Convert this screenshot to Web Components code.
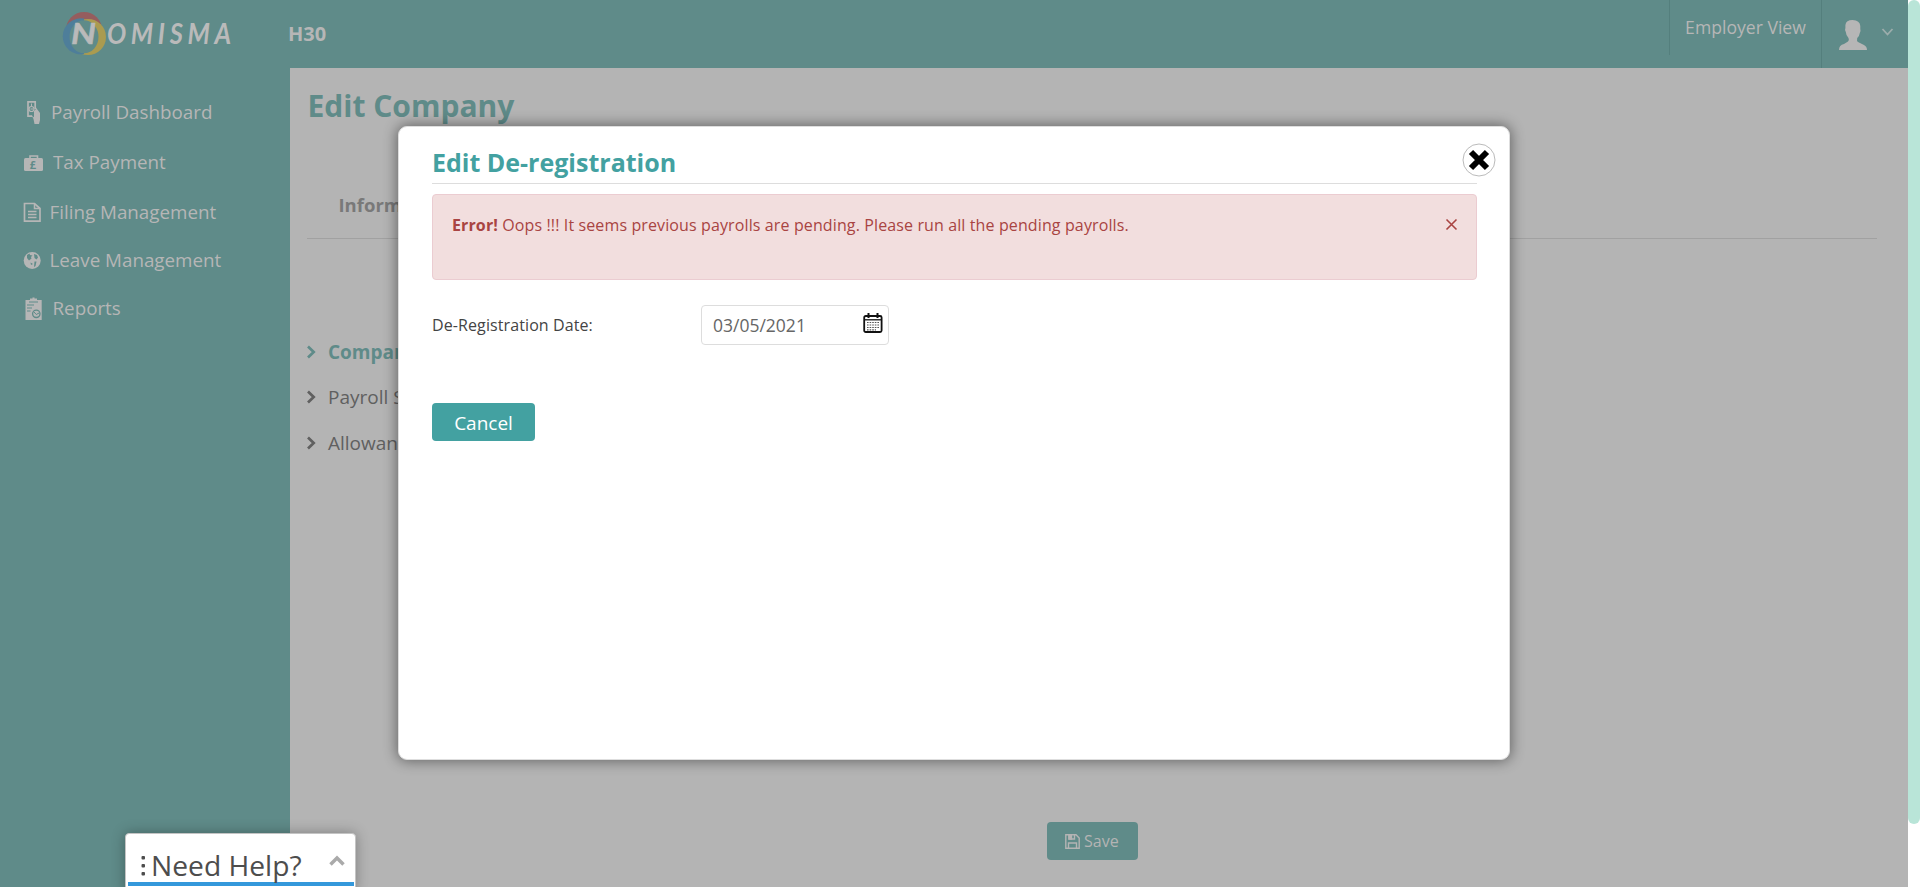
<!DOCTYPE html>
<html lang="en">
<head>
<meta charset="utf-8">
<title>Nomisma</title>
<style>
html,body{margin:0;height:100%;overflow:hidden;font-family:"Open Sans","Noto Sans",sans-serif;background:#fff}
</style>
</head>
<body>
<nomisma-app></nomisma-app>
<script>
function define(name, html){
  customElements.define(name, class extends HTMLElement{
    constructor(){
      super();
      const t=document.createElement('template');
      t.innerHTML=html;
      this.attachShadow({mode:'open'}).appendChild(t.content.cloneNode(true));
    }
  });
}

define('nomisma-logo', `<style>:host{display:block;width:290px;height:68px}svg{display:block}</style>
<svg width="290" height="68" viewBox="0 0 290 68">
  <circle cx="84" cy="30" r="18" fill="#955d5e"/>
  <circle cx="88" cy="37" r="18" fill="#aa9b50"/>
  <path d="M84 18.600A18 18 0 1 0 84 54Z" fill="#4e7e9a"/>
  <ellipse cx="84" cy="36.800" rx="14.500" ry="16.500" fill="#5f8b89"/>
  <g fill="#bababa" font-family="Lato,sans-serif" font-style="italic" font-weight="700" font-size="29">
    <text x="71" y="44" textLength="25" lengthAdjust="spacingAndGlyphs" stroke="#bababa" stroke-width=".5">N</text>
    <text transform="translate(107 44) scale(.88 1)" x="0" y="0" textLength="141" lengthAdjust="spacing">OMISMA</text>
  </g>
</svg>`);

define('top-bar', `<style>
:host{display:flex;height:68px;background:#5f8b89;color:#b6b6b6}
b{font-size:20px;line-height:68px;margin-left:-2px;flex:1}
.view{height:55px;width:151px;border-left:1px solid #547f7d;text-align:center;font-size:17.600px;line-height:54px;white-space:nowrap}
.user{width:86px;border-left:1px solid #547f7d}
svg{display:block}
</style>
<nomisma-logo></nomisma-logo><b>H30</b>
<div class="view">Employer View</div>
<div class="user"><svg width="86" height="68" viewBox="1822 0 86 68"><path fill="#b6b6b6" d="M1839 50Q1839 45 1844 44L1848 41.500Q1849.500 40 1848.500 38Q1846 35.500 1845.800 32Q1844.500 30 1845.400 28V25Q1846 20 1852.500 20Q1860 20.500 1860.300 26V29Q1861 31 1859.800 33Q1859.500 36 1857.200 38Q1856.500 41 1858 42L1864 45Q1867 46.500 1867 50Z"/><path d="M1882.500 29L1887.500 34.500L1892.500 29" fill="none" stroke="#9cadac" stroke-width="1.800"/></svg></div>`);

define('side-item', `<style>
:host{display:flex;align-items:center;height:50px;padding-left:20px;color:#b6b6b6;font-size:18.800px;white-space:nowrap}
.icon{width:28px;height:28px;display:block;margin-right:var(--gap,0px)}
::slotted(svg){display:block;width:28px;height:28px}
</style><div class="icon"><slot name="icon"></slot></div><slot></slot>`);

define('side-menu', `<style>
:host{display:block;width:290px;background:#5f8b89;padding-top:19px;box-sizing:border-box}
</style>
<side-item style="--gap:3px"><svg slot="icon" viewBox="20 98 28 28"><path d="M32 116.200H28V101.800H35.200V109" fill="none" stroke="#b6b6b6" stroke-width="1.700"/><circle cx="31.500" cy="109" r="2.500" fill="none" stroke="#b6b6b6" stroke-width="1.200"/><path d="M31.500 103.500V106M30.500 109H33" stroke="#b6b6b6"/><path d="M31.500 115L34 117.500V111L36 109V107.500L37 109L40 113V120L39 124H34.500L33.500 119Z" fill="#b6b6b6"/></svg>Payroll Dashboard</side-item>
<side-item style="--gap:5px"><svg slot="icon" viewBox="20 148 28 28"><rect x="24" y="158" width="19" height="13" rx="1.500" fill="#b6b6b6"/><path d="M30 158.500V156H37.500V158.500" fill="none" stroke="#b6b6b6" stroke-width="1.600"/><text x="29.800" y="168.500" font-family="Open Sans" font-weight="700" font-size="11" fill="#5f8b89">£</text></svg>Tax Payment</side-item>
<side-item style="--gap:1.500px;height:49px"><svg slot="icon" viewBox="20 198 28 28"><path d="M24.500 203.500H34.500L40 208.500V221.200H24.500Z" fill="none" stroke="#b6b6b6" stroke-width="1.700"/><path d="M34.500 203.500V208.500H40" fill="none" stroke="#b6b6b6" stroke-width="1.500"/><path d="M28 211.500H36.500M28 214.500H36.500M28 217.500H36.500" stroke="#b6b6b6" stroke-width="1.300"/></svg>Filing Management</side-item>
<side-item style="--gap:1.500px;height:48px"><svg slot="icon" viewBox="20 246 28 28"><circle cx="32.200" cy="260.500" r="8.500" fill="#b6b6b6"/><path d="M27 255L29.500 253.500L30 255L32.500 255.500L31 257L31.500 258.500L29 260.500L27 258Z" fill="#5f8b89"/><path d="M34 254L37 255L38 257.500L36.500 259.500L34.500 258ZM30.500 262.500L33 264L31 265ZM34.500 261.500L36.500 261.500L35.500 266L34 267Z" fill="#5f8b89"/></svg>Leave Management</side-item>
<side-item style="--gap:4.500px;height:48px"><svg slot="icon" viewBox="20 294 28 28"><path d="M25.500 300H41.700V320H25.500ZM30 298.500H32.500V297.500H34.500V298.500H37V301H30Z" fill="#b6b6b6"/><path d="M29 302H38M27 305H34M27 308H32M27 311H30.500" stroke="#5f8b89" stroke-width="1.200"/><circle cx="36.300" cy="313.800" r="3.700" fill="none" stroke="#5f8b89" stroke-width="1.300"/><path d="M34 312L36.300 314.500L39 313" stroke="#5f8b89" fill="none"/></svg>Reports</side-item>`);

define('nav-link', `<style>
:host{display:flex;align-items:center;height:46px;color:#606060;font-size:19px;white-space:nowrap}
svg{display:block;width:21px;height:14px}
</style><svg viewBox="0 0 21 14"><path d="M1 1.500L6.700 7L1 12.500" fill="none" stroke="currentColor" stroke-width="2.700"/></svg><slot></slot>`);

define('company-page', `<style>
:host{display:flex;flex-direction:column;flex:1;background:#b4b4b4;padding:0 31px 0 17px;box-sizing:border-box;overflow:hidden}
h1{margin:18px 0 0 .5px;font-size:30px;line-height:40px;font-weight:700;color:#5f8b89}
.tabs{height:113px;box-sizing:border-box;border-bottom:1px solid #a1a1a1;padding:58px 0 0 31.500px;font-size:18.500px;font-weight:700;line-height:41px;color:#797979}
nav{padding-top:90px}
button{font:16px/38px "Open Sans",sans-serif;display:flex;align-items:center;gap:4px;width:91px;height:38px;margin:356px auto 0 740px;border:0;border-radius:4px;background:#5f8b89;color:#b4b4b4;padding:0 0 0 18px}
</style>
<h1>Edit Company</h1>
<div class="tabs">Information</div>
<nav><nav-link style="color:#5f8b89;font-weight:700">Company Details</nav-link><nav-link style="height:44px">Payroll Settings</nav-link><nav-link style="height:47px">Allowances</nav-link></nav>
<button><svg width="15" height="15" viewBox="0 0 15 15" fill="none" stroke="#b4b4b4" stroke-width="1.400"><path d="M.8.8H11L14.200 4V14.200H.8Z"/><path d="M3.500 14V9H11.500V14M4 1V5H9.500V1"/><path d="M4 1H6.500V5H4Z" fill="#b4b4b4"/></svg>Save</button>`);

define('error-alert', `<style>
:host{display:flex;justify-content:space-between;height:86px;box-sizing:border-box;border:1px solid #ebccd1;border-radius:4px;background:#f2dede;color:#a94442;font-size:16px;line-height:30px;padding:15px 18px 0 19px}
div{letter-spacing:.12px}
svg{display:block;margin-top:8px}
</style><div><slot></slot></div><svg width="13" height="13" viewBox="0 0 13 13"><path d="M1.500 1.500L11.500 11.500M11.500 1.500L1.500 11.500" stroke="#a94442" stroke-width="1.600"/></svg>`);

define('date-field', `<style>
:host{display:flex;align-items:center;justify-content:space-between;width:188px;height:40px;box-sizing:border-box;border:1px solid #ddd;border-radius:4px;color:#666;font-size:17.500px;padding:0 5px 0 11px}
svg{display:block;margin-top:-4px}
</style><slot></slot><svg width="20" height="20" viewBox="0 0 20 20"><rect x="1.200" y="3" width="17.400" height="16" rx="1.500" fill="#fff" stroke="#111" stroke-width="1.800"/><path d="M1 6.800H19" stroke="#111" stroke-width="1.300"/><path d="M5.500 0V5M14.500 0V5" stroke="#111" stroke-width="2"/><path d="M4 9.500H16.500M4 12H16.500M4 14.500H16.500M4 16.800H13" stroke="#555" stroke-width="1.200" stroke-dasharray="1.600 1"/></svg>`);

define('modal-dialog', `<style>
:host{display:block;position:absolute;left:398px;top:126px;width:1112px;height:634px;box-sizing:border-box;background:#fff;border:1px solid #dedede;border-radius:9px;box-shadow:0 0 14px 1px rgba(0,0,0,.45);padding:17px 32px 0 33px}
h2{margin:0;font-size:25px;line-height:36px;height:39px;font-weight:700;color:#43a1a1;border-bottom:1px solid #ddd}
.close{position:absolute;left:1062.500px;top:16px}
error-alert{margin-top:10px}
.row{display:flex;align-items:center;margin-top:25px}
label{width:269px;font-size:16px;color:#444;letter-spacing:.1px}
button{display:block;margin-top:58px;width:103px;height:38px;border:0;border-radius:4px;background:#43a1a1;color:#fff;font:19px/38px "Open Sans",sans-serif;padding:1px 0 0}
</style>
<h2>Edit De-registration</h2>
<svg class="close" width="34" height="34" viewBox="0 0 34 34"><circle cx="17" cy="17" r="16" fill="#fff" stroke="#bbb"/><path d="M9 9L25 25M25 9L9 25" stroke="#000" stroke-width="6"/></svg>
<error-alert><b>Error!</b> Oops !!! It seems previous payrolls are pending. Please run all the pending payrolls.</error-alert>
<div class="row"><label>De-Registration Date:</label><date-field>03/05/2021</date-field></div>
<button>Cancel</button>`);

define('help-widget', `<style>
:host{display:flex;position:absolute;left:125px;top:833px;width:231px;height:60px;box-sizing:border-box;background:#fff;border:1px solid #c4c4c4;border-radius:4px 4px 0 0;box-shadow:0 0 14px rgba(0,0,0,.3);font-size:28.200px;line-height:38px;color:#4d4d4d;white-space:nowrap}
.bar{position:absolute;left:2px;top:48px;width:226px;height:4px;background:#3498db}
span{position:relative;flex:1;padding-top:12px;font-weight:500}
svg{display:block}
</style>
<div class="bar"></div>
<svg width="25" height="50" viewBox="0 0 25 50" fill="#4d4d4d"><rect x="15.500" y="22" width="3.500" height="3.500" rx="1"/><rect x="15.500" y="30" width="3.500" height="3.500" rx="1"/><rect x="15.500" y="38" width="3.500" height="3.500" rx="1"/></svg>
<span>Need Help?</span>
<svg width="26" height="50" viewBox="0 0 26 50"><path d="M1.500 30.500L8 24L14.500 30.500" stroke="#aaa" stroke-width="3.500" fill="none"/></svg>`);

define('scroll-bar', `<style>
:host{display:block;width:12px;background:#fff}
div{height:824px;border-radius:6px;background:#b9e5d8}
</style><div></div>`);

define('nomisma-app', `<style>
:host{display:flex;position:relative;width:1920px;height:887px;overflow:hidden}
.page{width:1908px;display:flex;flex-direction:column}
.body{flex:1;display:flex;min-height:0}
</style>
<div class="page"><top-bar></top-bar><div class="body"><side-menu></side-menu><company-page></company-page></div></div>
<scroll-bar></scroll-bar>
<modal-dialog></modal-dialog>
<help-widget></help-widget>`);
</script>
</body>
</html>
